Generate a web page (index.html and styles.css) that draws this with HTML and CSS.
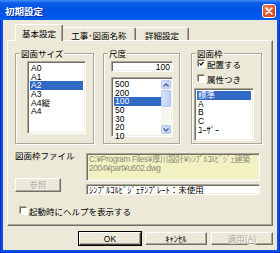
FILE: index.html
```html
<!DOCTYPE html>
<html lang="ja">
<head>
<meta charset="utf-8">
<title>初期設定</title>
<link rel="stylesheet" href="styles.css">
</head>
<body>
<div class="window">
  <div class="titlebar">
    <span class="title">初期設定</span>
    <span class="close"><svg width="8" height="8" viewBox="0 0 8 8"><path d="M1 1L7 7M7 1L1 7" stroke="#fff" stroke-width="1.6" stroke-linecap="round"/></svg></span>
  </div>
  <div class="client">
    <div class="tabs">
      <div class="tab active">基本設定</div>
      <div class="tab t2">工事･図面名称</div>
      <div class="tab t3">詳細設定</div>
    </div>
    <div class="panel">
      <div class="groups">
        <div class="group g1">
          <div class="glabel">図面サイズ</div>
          <div class="list l1">
            <div class="items">
              <div class="item">A0</div>
              <div class="item">A1</div>
              <div class="item sel">A2</div>
              <div class="item">A3</div>
              <div class="item">A4縦</div>
              <div class="item">A4</div>
            </div>
          </div>
        </div>
        <div class="group g2">
          <div class="glabel">尺度</div>
          <div class="edit scale">100</div>
          <div class="list l2">
            <div class="items">
              <div class="item">500</div>
              <div class="item">200</div>
              <div class="item sel">100</div>
              <div class="item">50</div>
              <div class="item">30</div>
              <div class="item">20</div>
              <div class="item">10</div>
            </div>
            <div class="scrollbar">
              <div class="sbtn"><svg width="6" height="4" viewBox="0 0 6 4"><path d="M0.5 3.5L3 1L5.5 3.5" fill="none" stroke="#4D6185" stroke-width="1.3"/></svg></div>
              <div class="thumb"></div>
              <div class="track"></div>
              <div class="sbtn"><svg width="6" height="4" viewBox="0 0 6 4"><path d="M0.5 0.5L3 3L5.5 0.5" fill="none" stroke="#4D6185" stroke-width="1.3"/></svg></div>
            </div>
          </div>
        </div>
        <div class="group g3">
          <div class="glabel">図面枠</div>
          <div class="check c1"><span class="cbox"><svg width="5" height="5" viewBox="0 0 5 5"><path d="M0.5 2.3L2 3.8L4.5 1" fill="none" stroke="#000" stroke-width="1.2"/></svg></span><span>配置する</span></div>
          <div class="check c2"><span class="cbox"></span><span>属性つき</span></div>
          <div class="list l3">
            <div class="items">
              <div class="item sel">標準</div>
              <div class="item">A</div>
              <div class="item">B</div>
              <div class="item">C</div>
              <div class="item">ﾕｰｻﾞｰ</div>
            </div>
          </div>
        </div>
      </div>
      <div class="filerow">
        <div class="fileleft">
          <div class="flabel">図面枠ファイル</div>
          <div class="btn small disabled">参照</div>
        </div>
        <div class="fileright">
          <div class="edit path">C:¥Program Files¥厚川設計¥ｼﾝﾌﾟﾙｺﾙﾋﾞｼﾞｪ建築<br>2004¥part¥u602.dwg</div>
          <div class="edit tmpl">ｼﾝﾌﾟﾙｺﾙﾋﾞｼﾞｪﾃﾝﾌﾟﾚｰﾄ：未使用</div>
        </div>
      </div>
      <div class="check help"><span class="cbox"></span><span>起動時にヘルプを表示する</span></div>
    </div>
    <div class="buttons">
      <div class="btn def">OK</div>
      <div class="btn">ｷｬﾝｾﾙ</div>
      <div class="btn disabled">適用(<u>A</u>)</div>
    </div>
  </div>
</div>
</body>
</html>
```

FILE: styles.css
```css
* { box-sizing: border-box; margin: 0; padding: 0; }
html, body { width: 280px; height: 253px; overflow: hidden; background: #fff; }
body {
  font-family: "Liberation Sans", "Noto Sans CJK JP", sans-serif;
  font-size: 8.5px;
  line-height: 10px;
  color: #000;
}
.window {
  width: 280px;
  height: 253px;
  display: flex;
  flex-direction: column;
  background: #0A52E2;
  box-shadow: inset 1px 0 #0831D9, inset -1px 0 #0831D9, inset 0 -1px #0831D9;
}
.titlebar {
  height: 20px;
  display: flex;
  align-items: center;
  justify-content: space-between;
  padding: 0 4px 0 5px;
  background: linear-gradient(to bottom, #3E8FF5 0, #0C5BEA 3px, #0054E3 45%, #0057EC 80%, #0A5FEE 100%);
}
.title {
  color: #fff;
  font-weight: bold;
  font-size: 9.5px;
  font-family: "Noto Sans CJK JP", sans-serif;
  text-shadow: 1px 1px #0A2A9A;
  margin-top: 1px;
}
.close {
  width: 14px;
  height: 14px;
  margin-top: 2px;
  display: flex;
  align-items: center;
  justify-content: center;
  border: 1px solid #fff;
  border-radius: 3px;
  background: radial-gradient(circle at 35% 30%, #F08A62 0, #E2582E 45%, #C8401A 100%);
}
.client {
  flex: 1;
  margin: 0 3px 3px;
  background: #ECE9D8;
  padding: 4px 4px 5px;
  display: flex;
  flex-direction: column;
}
.tabs {
  height: 16px;
  display: flex;
  align-items: flex-end;
  padding-left: 8px;
  position: relative;
  z-index: 1;
}
.tab {
  height: 13px;
  border-top: 1px solid #fff;
  border-left: 1px solid #fff;
  border-right: 1px solid #716F64;
  border-radius: 2px 2px 0 0;
  box-shadow: inset -1px 0 #ACA899;
  background: #ECE9D8;
  display: flex;
  align-items: center;
  justify-content: center;
  padding-top: 1px;
  font-family: "Noto Sans CJK JP", sans-serif;
}
.tab.active {
  width: 48px;
  height: 17px;
  margin-bottom: -1px;
  padding-bottom: 2px;
}
.tab.t2 { width: 73px; border-left: none; }
.tab.t3 { width: 53px; border-left: none; }
.panel {
  height: 186px;
  border: 1px solid;
  border-color: #fff #716F64 #716F64 #fff;
  box-shadow: inset -1px -1px #ACA899;
  padding: 12px 0 0 7px;
  display: flex;
  flex-direction: column;
}
.groups {
  display: flex;
  height: 91px;
}
.group {
  height: 91px;
  border: 1px solid #ACA899;
  box-shadow: inset 1px 1px #fff, 1px 1px #fff;
  display: flex;
  flex-direction: column;
  align-items: flex-start;
}
.g1 { width: 79px; }
.g2 { width: 77px; margin-left: 9px; }
.g3 { width: 71px; margin-left: 11px; }
.glabel {
  margin: -6px 0 0 4px;
  padding: 0 1px;
  background: #ECE9D8;
  height: 10px;
  font-family: "Noto Sans CJK JP", sans-serif;
}
.list, .edit {
  border: 1px solid;
  border-color: #ACA899 #fff #fff #ACA899;
  box-shadow: inset 1px 1px #716F64, inset -1px -1px #F1EFE2;
  background: #fff;
}
.list { display: flex; padding: 2px; }
.items { flex: 1; display: flex; flex-direction: column; }
.item { height: 8.7px; line-height: 8.7px; padding-left: 1px; white-space: nowrap; }
.item.sel { background: #316AC5; color: #fff; }
.l1 { width: 59px; height: 73px; margin: 3px 0 0 11px; }
.scale { width: 62px; height: 11px; margin: 3px 0 0 7px; text-align: right; padding-right: 2px; line-height: 10px; }
.l2 { width: 62px; height: 60px; margin: 5px 0 0 7px; padding-right: 1px; }
.l3 { width: 60px; height: 53px; margin: 4px 0 0 2px; }
.scrollbar { width: 10px; display: flex; flex-direction: column; background: #F7F6F1; }
.sbtn, .thumb {
  border: 1px solid #B7CAF5;
  border-radius: 2px;
  background: linear-gradient(to right, #D6E2FD, #BCD0FA);
}
.sbtn { height: 9px; display: flex; align-items: center; justify-content: center; }
.thumb { height: 17px; margin-top: 1px; }
.track { flex: 1; }
.check {
  display: flex;
  align-items: center;
  height: 11px;
  margin-left: 6px;
  font-family: "Noto Sans CJK JP", sans-serif;
}
.c1 { margin-top: 0; }
.c2 { margin-top: 4px; }
.cbox {
  width: 7px;
  height: 7px;
  margin-right: 2px;
  border: 1px solid;
  border-color: #716F64 #fff #fff #716F64;
  box-shadow: 1px 1px #fff, -1px -1px #ACA899;
  background: #fff;
  display: flex;
  align-items: center;
  justify-content: center;
}
.filerow {
  display: flex;
  margin-top: 9px;
}
.fileleft {
  width: 71px;
  display: flex;
  flex-direction: column;
  align-items: flex-start;
}
.flabel { margin-top: -3px; font-family: "Noto Sans CJK JP", sans-serif; }
.fileright { width: 174px; display: flex; flex-direction: column; }
.path {
  height: 28px;
  background: #F2F1C1;
  color: #8C8C7A;
  padding: 2px 0 0 2px;
  font-size: 8.2px;
  letter-spacing: -0.3px;
  line-height: 8.6px;
  white-space: nowrap;
  overflow: hidden;
}
.tmpl { height: 11px; margin-top: 3px; padding-left: 2px; line-height: 10px; white-space: nowrap; }
.btn {
  width: 62px;
  height: 13px;
  border: 1px solid;
  border-color: #fff #716F64 #716F64 #fff;
  box-shadow: inset -1px -1px #ACA899;
  background: #ECE9D8;
  display: flex;
  align-items: center;
  justify-content: center;
  line-height: 10px;
}
.btn.small { width: 46px; height: 14px; margin-top: 18px; }
.btn.disabled { color: #ACA899; text-shadow: 1px 1px #fff; }
.btn.def { outline: 1px solid #000; outline-offset: 0; border-color: #fff #404040 #404040 #fff; }
.check.help { margin: 10px 0 0 5px; }
.buttons {
  display: flex;
  justify-content: flex-end;
  gap: 4px;
  margin-top: 6px;
}
```
